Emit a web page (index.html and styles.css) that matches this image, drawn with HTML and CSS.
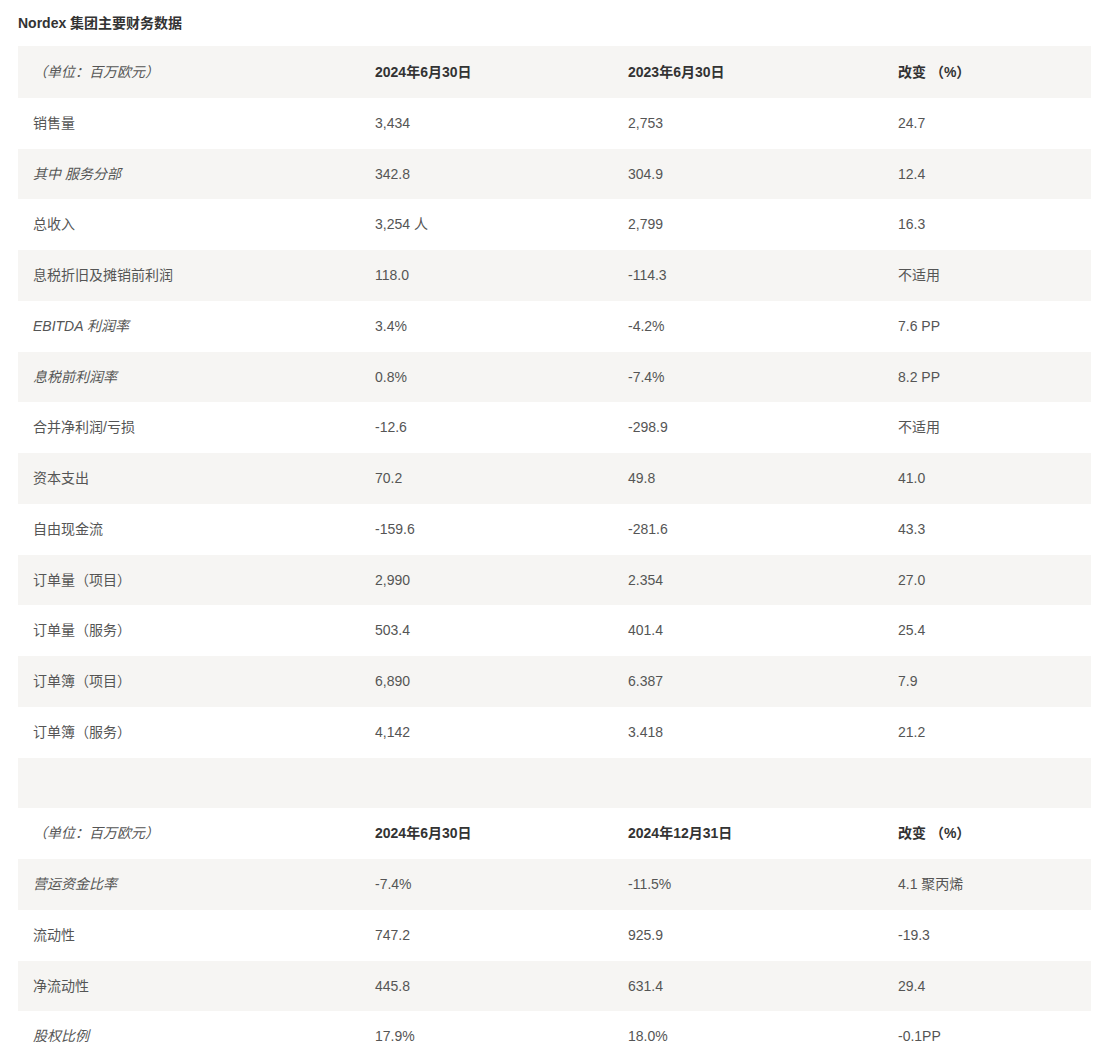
FILE: index.html
```html
<!DOCTYPE html>
<html lang="zh">
<head>
<meta charset="utf-8">
<title>Nordex 集团主要财务数据</title>
<link rel="stylesheet" href="styles.css">
</head>
<body>
<div class="page">
<h2 class="title">Nordex 集团主要财务数据</h2>
<table class="fin">
<colgroup><col class="c1"><col class="c2"><col class="c3"><col class="c4"></colgroup>
<tbody>
<tr class="head"><td class="it">（单位：百万欧元）</td><td>2024年6月30日</td><td>2023年6月30日</td><td>改变 （%）</td></tr>
<tr><td>销售量</td><td>3,434</td><td>2,753</td><td>24.7</td></tr>
<tr><td class="it">其中 服务分部</td><td>342.8</td><td>304.9</td><td>12.4</td></tr>
<tr><td>总收入</td><td>3,254 人</td><td>2,799</td><td>16.3</td></tr>
<tr><td>息税折旧及摊销前利润</td><td>118.0</td><td>-114.3</td><td>不适用</td></tr>
<tr><td class="it">EBITDA 利润率</td><td>3.4%</td><td>-4.2%</td><td>7.6 PP</td></tr>
<tr><td class="it">息税前利润率</td><td>0.8%</td><td>-7.4%</td><td>8.2 PP</td></tr>
<tr><td>合并净利润/亏损</td><td>-12.6</td><td>-298.9</td><td>不适用</td></tr>
<tr><td>资本支出</td><td>70.2</td><td>49.8</td><td>41.0</td></tr>
<tr><td>自由现金流</td><td>-159.6</td><td>-281.6</td><td>43.3</td></tr>
<tr><td>订单量（项目）</td><td>2,990</td><td>2.354</td><td>27.0</td></tr>
<tr><td>订单量（服务）</td><td>503.4</td><td>401.4</td><td>25.4</td></tr>
<tr><td>订单簿（项目）</td><td>6,890</td><td>6.387</td><td>7.9</td></tr>
<tr><td>订单簿（服务）</td><td>4,142</td><td>3.418</td><td>21.2</td></tr>
<tr><td>&nbsp;</td><td></td><td></td><td></td></tr>
<tr class="head"><td class="it">（单位：百万欧元）</td><td>2024年6月30日</td><td>2024年12月31日</td><td>改变 （%）</td></tr>
<tr><td class="it">营运资金比率</td><td>-7.4%</td><td>-11.5%</td><td>4.1 聚丙烯</td></tr>
<tr><td>流动性</td><td>747.2</td><td>925.9</td><td>-19.3</td></tr>
<tr><td>净流动性</td><td>445.8</td><td>631.4</td><td>29.4</td></tr>
<tr><td class="it">股权比例</td><td>17.9%</td><td>18.0%</td><td>-0.1PP</td></tr>
</tbody>
</table>
</div>
</body>
</html>
```
FILE: styles.css
```css
html, body {
  margin: 0;
  padding: 0;
  background: #fff;
}
body {
  font-family: "Liberation Sans", Arial, "Noto Sans CJK SC", sans-serif;
  font-size: 14px;
  color: #555;
}
.page {
  padding: 14px 7px 0 18px;
}
.title {
  margin: 0 0 14px 0;
  font-size: 14px;
  line-height: 18px;
  font-weight: bold;
  color: #333;
}
.fin {
  width: 1073px;
  border-collapse: collapse;
  table-layout: fixed;
}
.c1 { width: 342px; }
.c2 { width: 253px; }
.c3 { width: 270px; }
.c4 { width: 208px; }
.fin td {
  padding: 15px 15px;
  line-height: 20.75px;
  vertical-align: middle;
  text-align: left;
}
.fin tr:first-child td {
  padding-top: 15.6px;
  padding-bottom: 15.6px;
}
.fin tr:nth-child(odd) td {
  background: #f6f5f3;
}
.fin tr.head td {
  font-weight: bold;
  color: #333;
}
.fin tr.head td.it {
  font-weight: normal;
  color: #555;
}
.fin td.it {
  font-style: italic;
}
```
